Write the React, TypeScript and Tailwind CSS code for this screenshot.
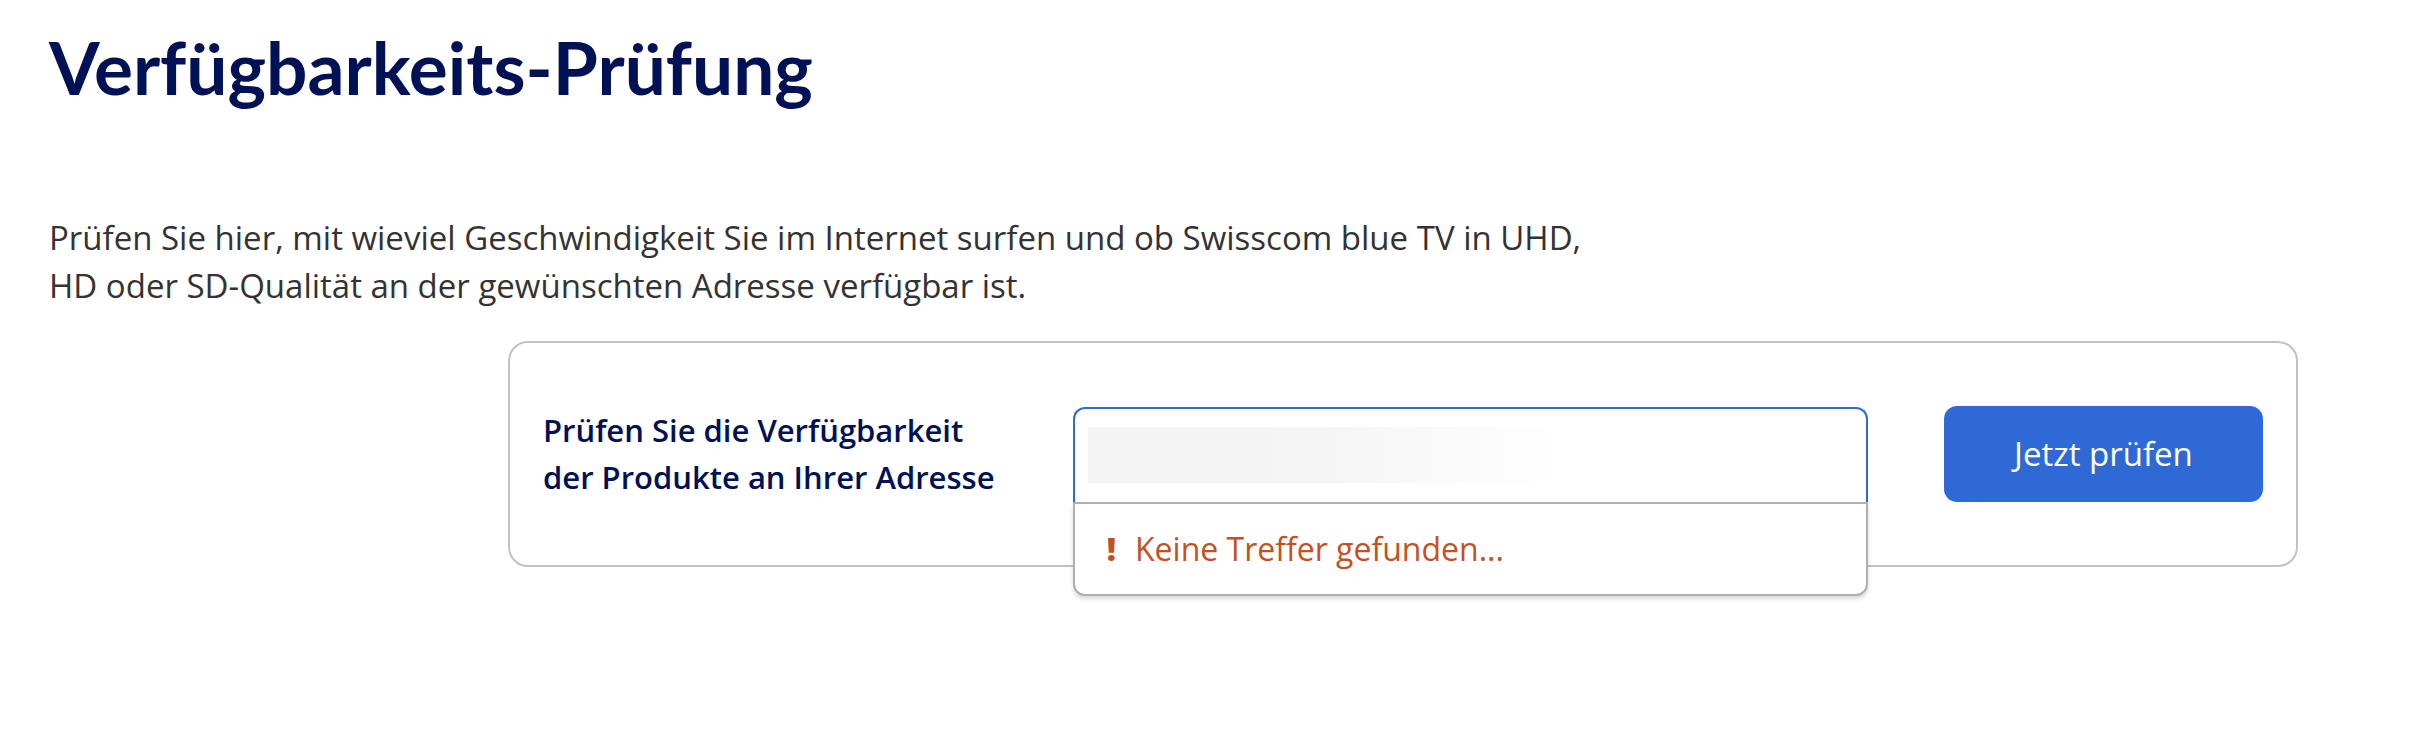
export default function App() {
  const body = { fontFamily: '"Open Sans", "Noto Sans", sans-serif' }
  const head = { fontFamily: 'Lato, "Open Sans", sans-serif' }

  return (
    <div className="min-h-[746px] w-full bg-white pl-[49px]" style={body}>
      <h1 className="pt-[31px] text-[73px] leading-none font-bold text-[#001155]" style={head}>
        Verfügbarkeits-Prüfung
      </h1>

      <p className="mt-[110px] text-[33px] leading-[48px] text-[#333333]">
        Prüfen Sie hier, mit wieviel Geschwindigkeit Sie im Internet surfen und ob Swisscom blue TV in UHD,
        <br />
        HD oder SD-Qualität an der gewünschten Adresse verfügbar ist.
      </p>

      <div className="mt-[31px] ml-[459px] flex h-[226px] w-[1790px] items-center rounded-[20px] border-2 border-[#c2c2c2] px-[33px]">
        <div className="w-[531px] text-[31px] leading-[47px] font-semibold text-[#001155]">
          Prüfen Sie die Verfügbarkeit
          <br />
          der Produkte an Ihrer Adresse
        </div>

        <div className="relative h-[95px] w-[797px]">
          <div className="flex h-[95px] items-center rounded-t-[12px] border-2 border-b-0 border-[#2f69d5] bg-white pl-[13px]">
            <div className="h-[56px] w-[474px] bg-gradient-to-r from-[#f3f3f3] via-[#f5f5f5] to-white" />
          </div>
          <div className="absolute top-full left-0 z-10 flex h-[94px] w-full items-center gap-[19px] rounded-b-[12px] border-2 border-[#b0b0b0] bg-white pl-[32px] shadow-[0_3px_4px_rgba(0,0,0,0.15)]">
            <span className="text-[32px] font-extrabold text-[#c4511f]">!</span>
            <span className="text-[32px] text-[#c4511f]">Keine Treffer gefunden...</span>
          </div>
        </div>

        <button className="ml-[76px] h-[96px] w-[320px] rounded-[13px] bg-[#2f69d5] text-[33px] text-white">
          Jetzt prüfen
        </button>
      </div>
    </div>
  )
}
